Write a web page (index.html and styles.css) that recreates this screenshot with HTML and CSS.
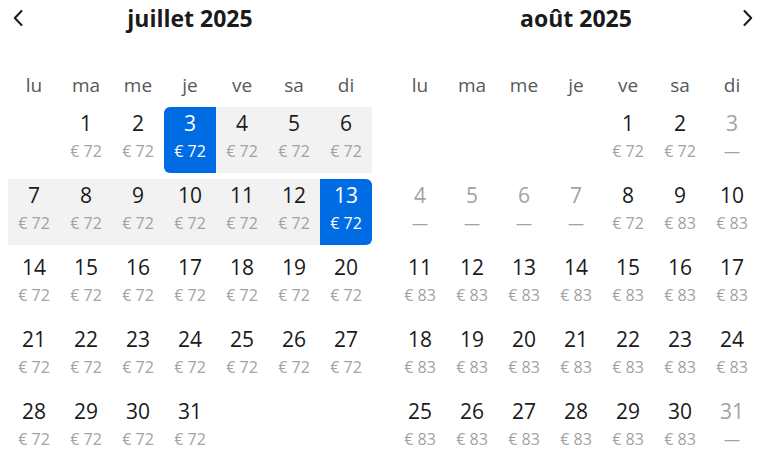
FILE: index.html
```html
<!DOCTYPE html>
<html lang="fr">
<head>
<meta charset="utf-8">
<title>Calendrier</title>
<link rel="stylesheet" href="styles.css">
</head>
<body>
<div class="calendar">
  <section class="month">
    <header class="month-head">
      <button class="nav" aria-label="Mois précédent"><svg width="10" height="16" viewBox="0 0 10 16"><path d="M8.5 1 L1.8 8 L8.5 15" fill="none" stroke="#1a1a1a" stroke-width="2" stroke-linecap="round" stroke-linejoin="round"/></svg></button>
      <h2 class="title">juillet 2025</h2>
      <span class="nav-spacer"></span>
    </header>
    <div class="weekdays"><span>lu</span><span>ma</span><span>me</span><span>je</span><span>ve</span><span>sa</span><span>di</span></div>
    <div class="grid">
      <div class="day empty"></div>
      <div class="day"><span class="num">1</span><span class="price">€ 72</span></div>
      <div class="day"><span class="num">2</span><span class="price">€ 72</span></div>
      <div class="day start"><span class="num">3</span><span class="price">€ 72</span></div>
      <div class="day range"><span class="num">4</span><span class="price">€ 72</span></div>
      <div class="day range"><span class="num">5</span><span class="price">€ 72</span></div>
      <div class="day range"><span class="num">6</span><span class="price">€ 72</span></div>
      <div class="day range"><span class="num">7</span><span class="price">€ 72</span></div>
      <div class="day range"><span class="num">8</span><span class="price">€ 72</span></div>
      <div class="day range"><span class="num">9</span><span class="price">€ 72</span></div>
      <div class="day range"><span class="num">10</span><span class="price">€ 72</span></div>
      <div class="day range"><span class="num">11</span><span class="price">€ 72</span></div>
      <div class="day range"><span class="num">12</span><span class="price">€ 72</span></div>
      <div class="day end"><span class="num">13</span><span class="price">€ 72</span></div>
      <div class="day"><span class="num">14</span><span class="price">€ 72</span></div>
      <div class="day"><span class="num">15</span><span class="price">€ 72</span></div>
      <div class="day"><span class="num">16</span><span class="price">€ 72</span></div>
      <div class="day"><span class="num">17</span><span class="price">€ 72</span></div>
      <div class="day"><span class="num">18</span><span class="price">€ 72</span></div>
      <div class="day"><span class="num">19</span><span class="price">€ 72</span></div>
      <div class="day"><span class="num">20</span><span class="price">€ 72</span></div>
      <div class="day"><span class="num">21</span><span class="price">€ 72</span></div>
      <div class="day"><span class="num">22</span><span class="price">€ 72</span></div>
      <div class="day"><span class="num">23</span><span class="price">€ 72</span></div>
      <div class="day"><span class="num">24</span><span class="price">€ 72</span></div>
      <div class="day"><span class="num">25</span><span class="price">€ 72</span></div>
      <div class="day"><span class="num">26</span><span class="price">€ 72</span></div>
      <div class="day"><span class="num">27</span><span class="price">€ 72</span></div>
      <div class="day"><span class="num">28</span><span class="price">€ 72</span></div>
      <div class="day"><span class="num">29</span><span class="price">€ 72</span></div>
      <div class="day"><span class="num">30</span><span class="price">€ 72</span></div>
      <div class="day"><span class="num">31</span><span class="price">€ 72</span></div>
    </div>
  </section>
  <section class="month">
    <header class="month-head">
      <span class="nav-spacer"></span>
      <h2 class="title">août 2025</h2>
      <button class="nav" aria-label="Mois suivant"><svg width="10" height="16" viewBox="0 0 10 16"><path d="M1.5 1 L8.2 8 L1.5 15" fill="none" stroke="#1a1a1a" stroke-width="2" stroke-linecap="round" stroke-linejoin="round"/></svg></button>
    </header>
    <div class="weekdays"><span>lu</span><span>ma</span><span>me</span><span>je</span><span>ve</span><span>sa</span><span>di</span></div>
    <div class="grid">
      <div class="day empty"></div>
      <div class="day empty"></div>
      <div class="day empty"></div>
      <div class="day empty"></div>
      <div class="day"><span class="num">1</span><span class="price">€ 72</span></div>
      <div class="day"><span class="num">2</span><span class="price">€ 72</span></div>
      <div class="day disabled"><span class="num">3</span><span class="price">—</span></div>
      <div class="day disabled"><span class="num">4</span><span class="price">—</span></div>
      <div class="day disabled"><span class="num">5</span><span class="price">—</span></div>
      <div class="day disabled"><span class="num">6</span><span class="price">—</span></div>
      <div class="day disabled"><span class="num">7</span><span class="price">—</span></div>
      <div class="day"><span class="num">8</span><span class="price">€ 72</span></div>
      <div class="day"><span class="num">9</span><span class="price">€ 83</span></div>
      <div class="day"><span class="num">10</span><span class="price">€ 83</span></div>
      <div class="day"><span class="num">11</span><span class="price">€ 83</span></div>
      <div class="day"><span class="num">12</span><span class="price">€ 83</span></div>
      <div class="day"><span class="num">13</span><span class="price">€ 83</span></div>
      <div class="day"><span class="num">14</span><span class="price">€ 83</span></div>
      <div class="day"><span class="num">15</span><span class="price">€ 83</span></div>
      <div class="day"><span class="num">16</span><span class="price">€ 83</span></div>
      <div class="day"><span class="num">17</span><span class="price">€ 83</span></div>
      <div class="day"><span class="num">18</span><span class="price">€ 83</span></div>
      <div class="day"><span class="num">19</span><span class="price">€ 83</span></div>
      <div class="day"><span class="num">20</span><span class="price">€ 83</span></div>
      <div class="day"><span class="num">21</span><span class="price">€ 83</span></div>
      <div class="day"><span class="num">22</span><span class="price">€ 83</span></div>
      <div class="day"><span class="num">23</span><span class="price">€ 83</span></div>
      <div class="day"><span class="num">24</span><span class="price">€ 83</span></div>
      <div class="day"><span class="num">25</span><span class="price">€ 83</span></div>
      <div class="day"><span class="num">26</span><span class="price">€ 83</span></div>
      <div class="day"><span class="num">27</span><span class="price">€ 83</span></div>
      <div class="day"><span class="num">28</span><span class="price">€ 83</span></div>
      <div class="day"><span class="num">29</span><span class="price">€ 83</span></div>
      <div class="day"><span class="num">30</span><span class="price">€ 83</span></div>
      <div class="day disabled"><span class="num">31</span><span class="price">—</span></div>
    </div>
  </section>
</div>
</body>
</html>
```

FILE: styles.css
```css
html, body {
  margin: 0;
  padding: 0;
  background: #ffffff;
}

body {
  font-family: "Open Sans", "Noto Sans", "Liberation Sans", sans-serif;
  color: #1a1a1a;
}

.calendar {
  display: flex;
  gap: 22px;
  padding: 2px 17px 0 8px;
}

.month {
  width: 364px;
  display: flex;
  flex-direction: column;
}

.month-head {
  display: grid;
  grid-template-columns: 20px 1fr 20px;
  align-items: center;
  height: 32px;
}

.nav {
  border: 0;
  background: none;
  padding: 0;
  margin: 0;
  width: 20px;
  height: 32px;
  display: flex;
  align-items: center;
  justify-content: center;
  cursor: pointer;
}

.nav svg {
  display: block;
}

.title {
  margin: 0;
  text-align: center;
  font-size: 23px;
  line-height: 32px;
  font-weight: 700;
  color: #1a1a1a;
}

.weekdays {
  display: grid;
  grid-template-columns: repeat(7, 52px);
  margin-top: 39px;
  font-size: 19px;
  line-height: 24px;
  color: #595959;
  text-align: center;
}

.grid {
  display: grid;
  grid-template-columns: repeat(7, 52px);
  grid-auto-rows: 66px;
  row-gap: 6px;
  margin-top: 10px;
}

.day {
  display: flex;
  flex-direction: column;
  align-items: center;
  padding-top: 3px;
  box-sizing: border-box;
}

.num {
  font-size: 21px;
  line-height: 26px;
  color: #1a1a1a;
}

.price {
  margin-top: 5px;
  font-size: 16px;
  line-height: 20px;
  color: #a2a2a2;
}

.day.range {
  background: #f2f2f2;
}

.day.start,
.day.end {
  background: #006ce4;
}

.day.start {
  border-radius: 6px 0 0 6px;
}

.day.end {
  border-radius: 0 6px 6px 0;
}

.day.start .num,
.day.start .price,
.day.end .num,
.day.end .price {
  color: #ffffff;
}

.day.disabled .num,
.day.disabled .price {
  color: #a2a2a2;
}
```
